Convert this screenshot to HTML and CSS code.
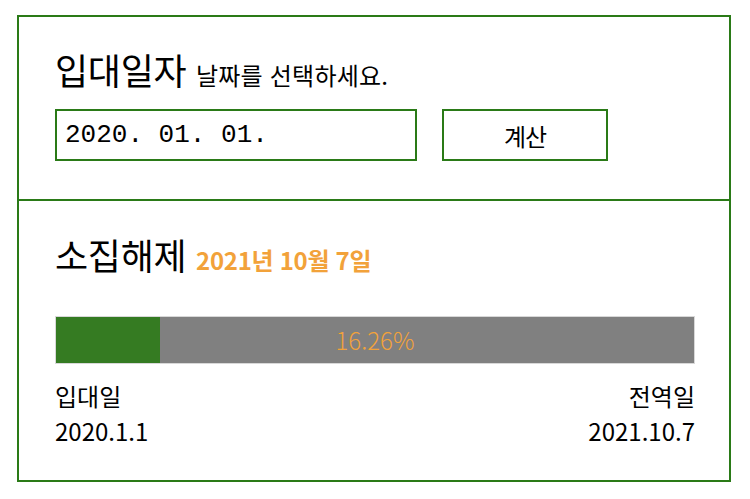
FILE: index.html
```html
<!DOCTYPE html>
<html lang="ko">
<head>
    <meta charset="UTF-8">
    <meta name="viewport" content="width=device-width, initial-scale=1.0">
    <title>전역일 계산기</title>
    <link rel="stylesheet" href="styles.css">
</head>
<body>
    <div class="calc">
        <div class="section enter">
            <h2 class="title">입대일자 <small>날짜를 선택하세요.</small></h2>
            <div class="form-row">
                <div class="date-input">2020. 01. 01.</div>
                <button class="calc-button">계산</button>
            </div>
        </div>
        <div class="section result">
            <h2 class="title">소집해제 <span class="end-date">2021년 10월 7일</span></h2>
            <div class="bar">
                <div class="bar-fill" style="width: 16.26%"></div>
                <span class="bar-text">16.26%</span>
            </div>
            <div class="dates">
                <p class="date-item">입대일<br>2020.1.1</p>
                <p class="date-item right">전역일<br>2021.10.7</p>
            </div>
        </div>
    </div>
</body>
</html>
```

FILE: styles.css
```css
body {
    margin: 0;
    padding: 15px 17px;
    font-family: "Noto Sans CJK KR", sans-serif;
    color: #000;
    background: #fff;
}
.calc {
    width: 714px;
    box-sizing: border-box;
    border: 2px solid #2a7a17;
}
.section {
    padding: 0 34px 0 36px;
}
.enter {
    height: 184px;
    padding-top: 27px;
    box-sizing: border-box;
    border-bottom: 2px solid #2a7a17;
}
.title {
    margin: 0;
    font-size: 36px;
    font-weight: 400;
    line-height: 50px;
    letter-spacing: -0.3px;
}
.title small {
    font-size: 24px;
    line-height: 1;
    letter-spacing: 0.2px;
}
.form-row {
    display: flex;
    gap: 25px;
    margin-top: 15px;
}
.date-input {
    width: 362px;
    height: 52px;
    box-sizing: border-box;
    border: 2px solid #2a7a17;
    padding-left: 8px;
    font-family: "Liberation Mono", monospace;
    font-size: 26px;
    line-height: 48px;
}
.calc-button {
    width: 166px;
    height: 52px;
    border: 2px solid #2a7a17;
    background: #fff;
    font-family: "Noto Sans CJK KR", sans-serif;
    font-size: 24px;
    letter-spacing: -1px;
    color: #000;
    padding: 0;
}
.result {
    padding-top: 28px;
    padding-bottom: 32px;
}
.end-date {
    font-size: 24px;
    font-weight: 700;
    line-height: 1;
    color: #f2a23a;
    letter-spacing: -0.3px;
}
.bar {
    position: relative;
    height: 46px;
    margin-top: 37px;
    background: #808080;
    border: 1px solid #d8d8d8;
}
.bar-fill {
    height: 100%;
    background: #357b22;
}
.bar-text {
    position: absolute;
    left: 0;
    right: 0;
    top: 0;
    text-align: center;
    line-height: 46px;
    font-size: 24px;
    font-weight: 300;
    color: #f2a23a;
}
.dates {
    display: flex;
    justify-content: space-between;
    margin-top: 14px;
}
.date-item {
    margin: 0;
    font-size: 24px;
    line-height: 35px;
}
.right {
    text-align: right;
}
```
